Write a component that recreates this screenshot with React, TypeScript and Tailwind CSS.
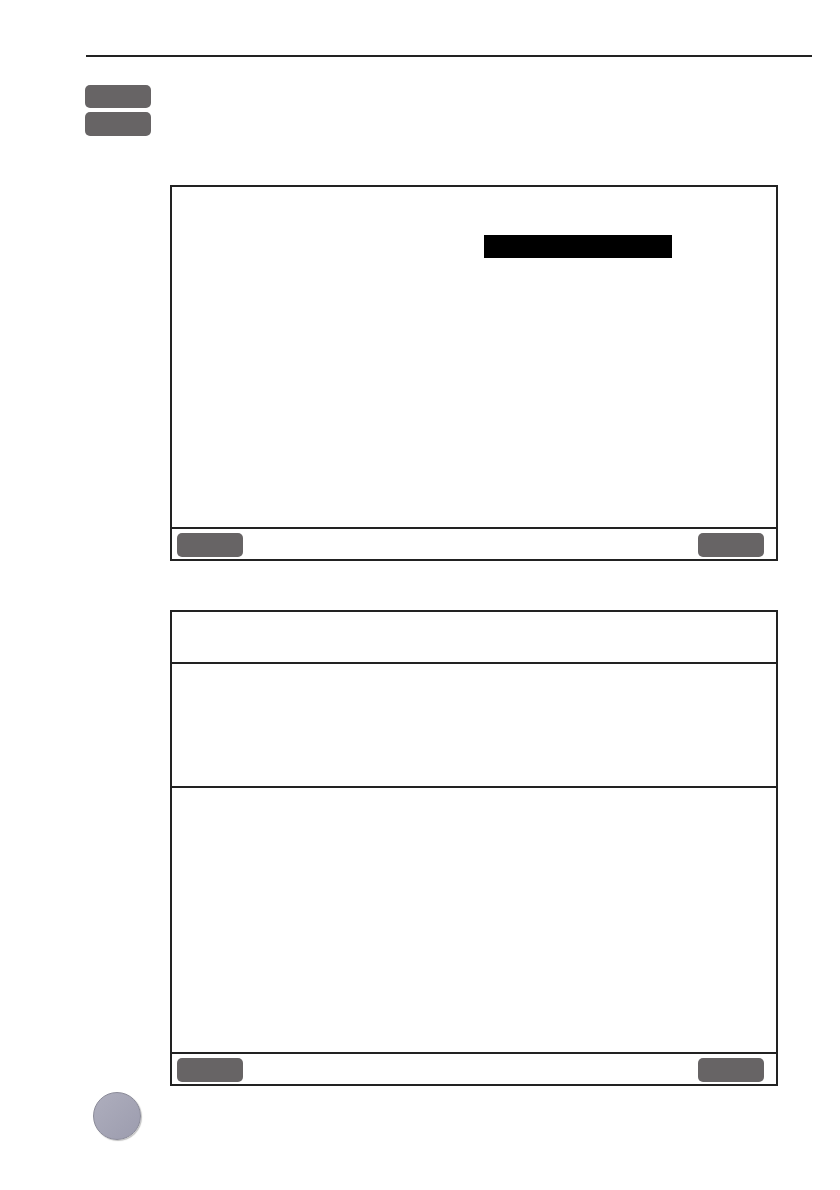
const KEY = 'rounded-[5px] bg-[#676465]'

function SoftKey({ className = '' }: { className?: string }) {
  return <div className={`h-[24px] w-[66px] ${KEY} ${className}`} />
}

function FooterBar() {
  return (
    <div className="flex h-[32px] items-start justify-between border-t-2 border-[#222] pl-[5px] pr-[12px] pt-[4px]">
      <SoftKey />
      <SoftKey />
    </div>
  )
}

export default function App() {
  return (
    <div className="relative h-[1190px] w-[840px] overflow-hidden bg-white">
      {/* page header rule */}
      <div className="ml-[86px] mt-[55px] h-[2px] w-[726px] bg-[#222]" />

      {/* side keys */}
      <div className="ml-[85px] mt-[28px] flex flex-col gap-[4px]">
        <div className={`h-[23px] w-[66px] ${KEY}`} />
        <div className={`h-[24px] w-[66px] ${KEY}`} />
      </div>

      {/* screen 1 */}
      <div className="ml-[170px] mt-[49px] flex h-[376px] w-[608px] flex-col border-2 border-[#222]">
        <div className="flex-1 pl-[312px] pt-[48px]">
          <div className="h-[23px] w-[188px] bg-black" />
        </div>
        <FooterBar />
      </div>

      {/* screen 2 */}
      <div className="ml-[170px] mt-[49px] flex h-[476px] w-[608px] flex-col border-2 border-[#222]">
        <div className="h-[50px]" />
        <div className="h-[124px] border-t-2 border-[#222]" />
        <div className="flex-1 border-t-2 border-[#222]" />
        <FooterBar />
      </div>

      {/* page marker */}
      <div className="ml-[93px] mt-[6px] h-[48px] w-[48px] rounded-full border border-[#8a8a98] bg-gradient-to-br from-[#aeaebd] to-[#9c9cae] shadow-[1px_1px_1px_rgba(0,0,0,0.25)]" />
    </div>
  )
}
